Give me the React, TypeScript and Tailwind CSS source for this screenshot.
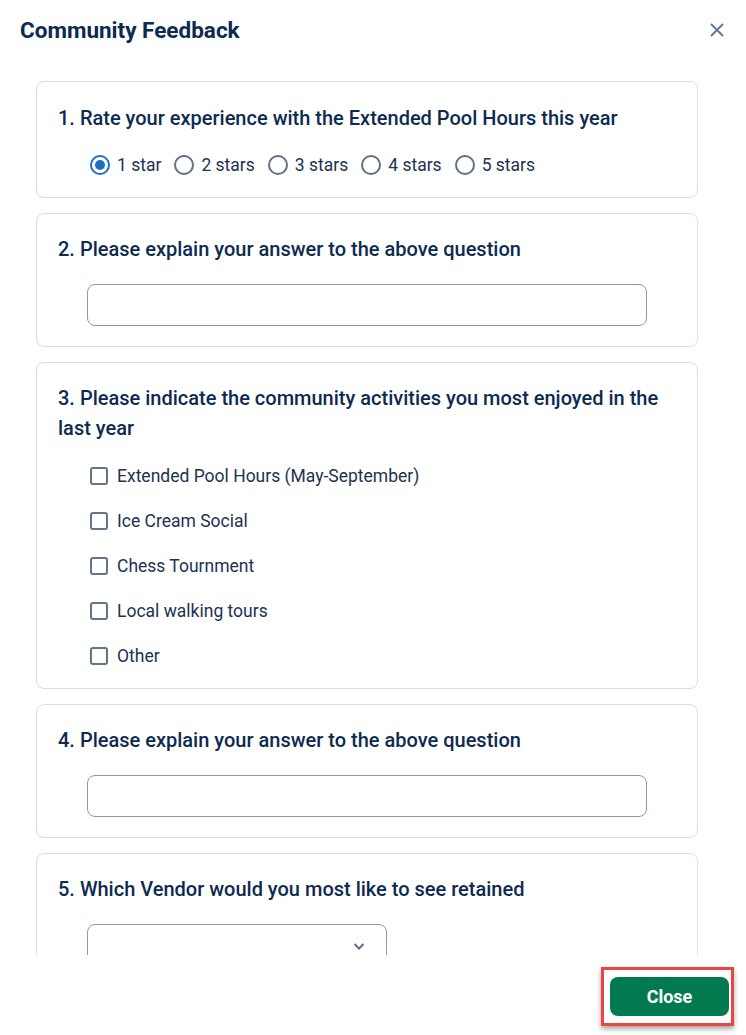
import React, { useState } from "react";

const font = { fontFamily: "Roboto, 'Noto Sans', sans-serif" };

const stars = ["1 star", "2 stars", "3 stars", "4 stars", "5 stars"];
const activities = [
  "Extended Pool Hours (May-September)",
  "Ice Cream Social",
  "Chess Tournment",
  "Local walking tours",
  "Other",
];

function Card({ children, className = "" }: { children: React.ReactNode; className?: string }) {
  return (
    <div className={`rounded-[8px] border border-[#dadee4] bg-white pl-[21px] pr-[20px] ${className}`}>
      {children}
    </div>
  );
}

function Question({ children }: { children: React.ReactNode }) {
  return <h3 className="text-[20px] font-medium leading-[30px] text-[#0d2b50]">{children}</h3>;
}

export default function App() {
  const [rating, setRating] = useState(0);
  const [checked, setChecked] = useState<boolean[]>(activities.map(() => false));

  return (
    <div className="flex h-[1035px] w-[746px] flex-col overflow-hidden bg-white" style={font}>
      {/* Header */}
      <div className="flex h-[64px] shrink-0 items-start justify-between pl-[20px] pr-[20px] pt-[15px]">
        <h2 className="text-[22.5px] font-bold leading-[30px] text-[#0d2b50]">Community Feedback</h2>
        <button className="mt-[6px] text-[#5d7591]">
          <svg width="18" height="18" viewBox="0 0 18 18" fill="none" stroke="currentColor" strokeWidth="1.8">
            <path d="M3 3L15 15M15 3L3 15" />
          </svg>
        </button>
      </div>

      {/* Body */}
      <div className="h-[891px] shrink-0 overflow-hidden pl-[36px] pt-[17px]">
        <div className="flex w-[662px] flex-col gap-[15px]">
          <Card className="pb-[20px] pt-[21px]">
            <Question>1. Rate your experience with the Extended Pool Hours this year</Question>
            <div className="mt-[20px] flex items-center pl-[32px] text-[17.5px] text-[#1c3352]">
              {stars.map((s, i) => (
                <label key={s} className="mr-[13px] flex cursor-pointer items-center gap-[7px]" onClick={() => setRating(i)}>
                  <span
                    className={`flex h-[20px] w-[20px] items-center justify-center rounded-full border-2 ${
                      rating === i ? "border-[#1e6dc2]" : "border-[#5f7086]"
                    }`}
                  >
                    {rating === i && <span className="h-[10px] w-[10px] rounded-full bg-[#1e6dc2]" />}
                  </span>
                  <span className="leading-[24px]">{s}</span>
                </label>
              ))}
            </div>
          </Card>

          <Card className="pb-[20px] pt-[20px]">
            <Question>2. Please explain your answer to the above question</Question>
            <div className="pl-[29px] pt-[20px]">
              <input className="h-[42px] w-[560px] rounded-[8px] border border-[#8a9aae] px-3 outline-none" />
            </div>
          </Card>

          <Card className="pb-0 pt-[20px]">
            <Question>
              3. Please indicate the community activities you most enjoyed in the
              <br />
              last year
            </Question>
            <div className="-mb-[1px] mt-[21px] flex flex-col pl-[32px]">
              {activities.map((a, i) => (
                <label
                  key={a}
                  className="flex h-[45px] cursor-pointer items-start gap-[9px] text-[17.5px] text-[#1c3352]"
                  onClick={() => setChecked(checked.map((c, j) => (j === i ? !c : c)))}
                >
                  <span
                    className={`mt-[3px] h-[18px] w-[18px] rounded-[3px] border-2 ${
                      checked[i] ? "border-[#1e6dc2] bg-[#1e6dc2]" : "border-[#62758c]"
                    }`}
                  />
                  <span className="leading-[24px]">{a}</span>
                </label>
              ))}
            </div>
          </Card>

          <Card className="pb-[20px] pt-[20px]">
            <Question>4. Please explain your answer to the above question</Question>
            <div className="pl-[29px] pt-[20px]">
              <input className="h-[42px] w-[560px] rounded-[8px] border border-[#8a9aae] px-3 outline-none" />
            </div>
          </Card>

          <Card className="pb-[20px] pt-[20px]">
            <Question>5. Which Vendor would you most like to see retained</Question>
            <div className="pl-[29px] pt-[20px]">
              <div className="flex h-[44px] w-[300px] items-center justify-end rounded-[8px] border border-[#8a9aae] pr-[20px] text-[#5d7088]">
                <svg width="14" height="14" viewBox="0 0 14 14" fill="none" stroke="currentColor" strokeWidth="2">
                  <path d="M2.5 5L7 9.5L11.5 5" />
                </svg>
              </div>
            </div>
          </Card>
        </div>
      </div>

      {/* Footer */}
      <div className="flex flex-1 items-start justify-end pr-[12px] pt-[12px]">
        <div className="border-[3px] border-[#ea4545] py-[7px] pl-[6px] pr-[2px] shadow-[0_3px_5px_rgba(0,0,0,0.35)]">
          <button className="h-[39px] w-[119px] rounded-[8px] bg-[#017a4f] text-[18px] font-bold text-white">
            Close
          </button>
        </div>
      </div>
    </div>
  );
}
